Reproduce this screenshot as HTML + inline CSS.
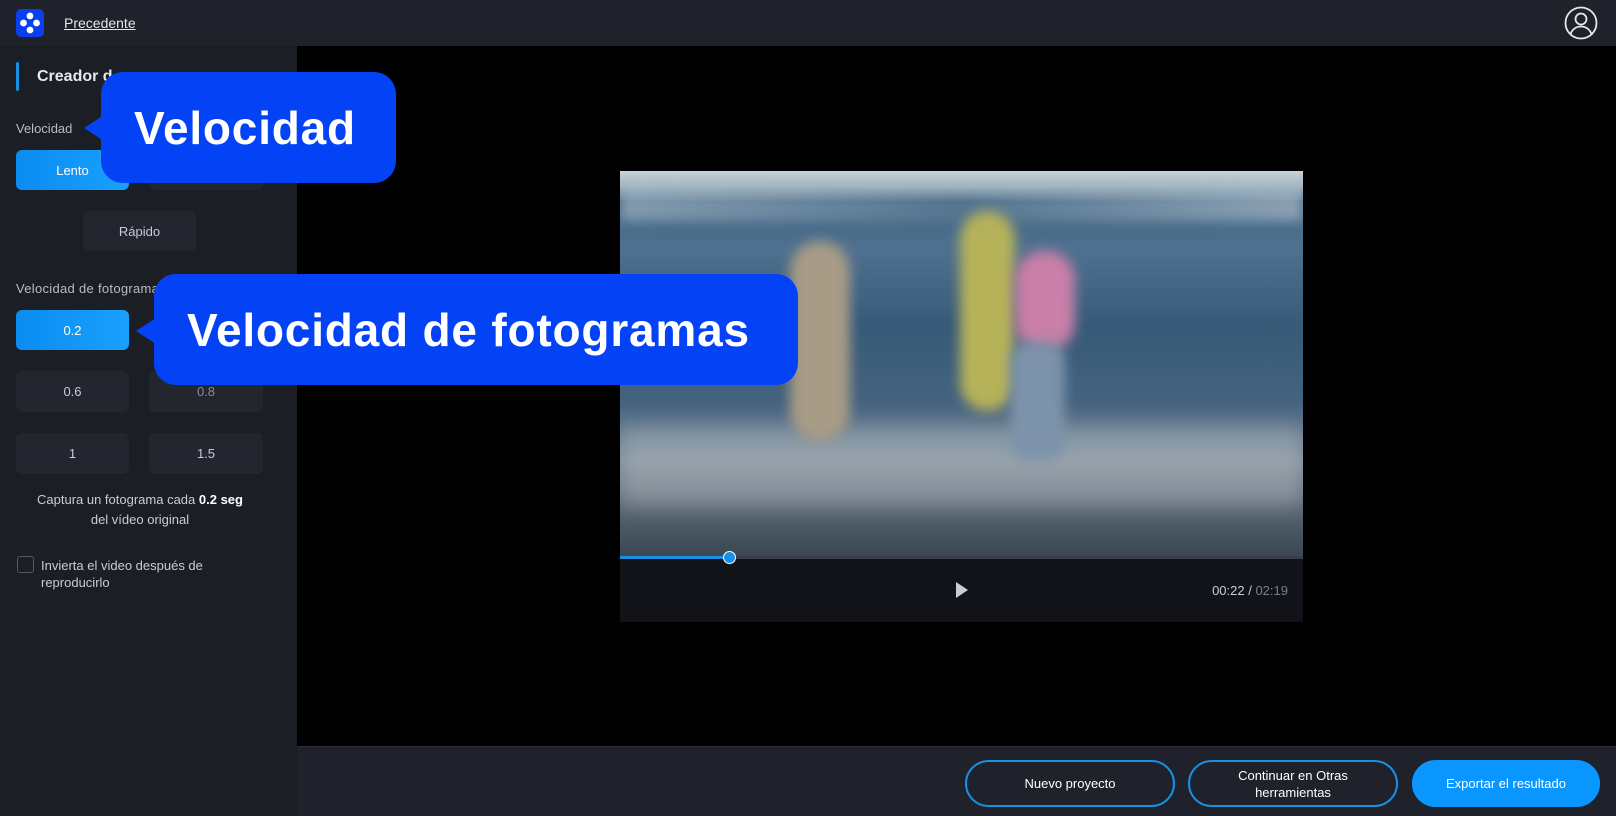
<!DOCTYPE html>
<html><head><meta charset="utf-8"><style>
*{box-sizing:border-box;margin:0;padding:0}
body{width:1616px;height:816px;background:#000;font-family:"Liberation Sans",sans-serif;position:relative;overflow:hidden;color:#fff}
.hdr{position:absolute;left:0;top:0;width:1616px;height:46px;background:#1f212b}
.side{position:absolute;left:0;top:46px;width:297px;height:770px;background:#1c1e26}
.bot{position:absolute;left:297px;top:746px;width:1319px;height:70px;background:#1f212b;border-top:1px solid #2c2f3a}
.abs{position:absolute}
.btn{position:absolute;border-radius:6px;background:#23252f;color:#c9ccd6;font-size:13px;display:flex;align-items:center;justify-content:center}
.act{background:linear-gradient(90deg,#0a8cf0,#1aa0ff);color:#fff}
.lbl{position:absolute;font-size:13px;color:#b8bbc6}
.call{position:absolute;background:#0343f5;border-radius:22px;color:#fff;font-weight:bold;font-size:46px;display:flex;align-items:center;padding-left:33px;letter-spacing:0.8px}
.pill{position:absolute;height:47px;border-radius:24px;border:2px solid #1890e6;color:#fff;font-size:13px;display:flex;align-items:center;justify-content:center;text-align:center;line-height:17px}
</style></head><body>
<div class="hdr"></div>
<div class="abs" style="left:16px;top:9px;width:28px;height:28px;background:#0a3ff0;border-radius:5px">
<svg width="28" height="28"><circle cx="14" cy="7" r="3.4" fill="#fff"/><circle cx="7.5" cy="14" r="3.4" fill="#fff"/><circle cx="20.5" cy="14" r="3.4" fill="#fff"/><circle cx="14" cy="21" r="3.4" fill="#fff"/></svg></div>
<div class="abs" style="left:64px;top:15px;font-size:14px;color:#e6e6e6;text-decoration:underline">Precedente</div>
<svg class="abs" style="left:1564px;top:6px" width="34" height="34" viewBox="0 0 34 34" fill="none" stroke="#e8e8e8" stroke-width="1.8"><circle cx="17" cy="17" r="15.5"/><circle cx="17" cy="13" r="5.5"/><path d="M6.5 28c2-5 6-7.5 10.5-7.5s8.5 2.5 10.5 7.5"/></svg>

<div class="side"></div>
<div class="abs" style="left:16px;top:62px;width:3px;height:29px;background:#1890e6;border-radius:2px"></div>
<div class="abs" style="left:37px;top:68px;font-size:16px;font-weight:bold;color:#e8e8ee">Creador d</div>
<div class="lbl" style="left:16px;top:121px">Velocidad</div>
<div class="btn act" style="left:16px;top:150px;width:113px;height:40px">Lento</div>
<div class="btn" style="left:149px;top:150px;width:114px;height:40px"></div>
<div class="btn" style="left:83px;top:211px;width:113px;height:40px">Rápido</div>
<div class="lbl" style="left:16px;top:281px;letter-spacing:0.3px">Velocidad de fotogramas</div>
<div class="btn act" style="left:16px;top:310px;width:113px;height:40px">0.2</div>
<div class="btn" style="left:16px;top:371px;width:113px;height:41px">0.6</div>
<div class="btn" style="left:149px;top:371px;width:114px;height:41px;color:#888b96">0.8</div>
<div class="btn" style="left:16px;top:433px;width:113px;height:41px">1</div>
<div class="btn" style="left:149px;top:433px;width:114px;height:41px">1.5</div>
<div class="abs" style="left:16px;top:490px;width:248px;text-align:center;font-size:13px;line-height:20px;color:#c9ccd6">Captura un fotograma cada <b style="color:#fff">0.2 seg</b><br>del vídeo original</div>
<div class="abs" style="left:17px;top:556px;width:17px;height:17px;border:1.5px solid #555964;border-radius:3px"></div>
<div class="abs" style="left:41px;top:557px;font-size:13px;line-height:17px;color:#c9ccd6">Invierta el video después de<br>reproducirlo</div>

<div class="abs" style="left:620px;top:171px;width:683px;height:386px;overflow:hidden;background:linear-gradient(180deg,#c9d3d8 0%,#9fb2bf 4%,#3f6482 8%,#4f7190 20%,#365a78 40%,#44637f 60%,#7a8794 75%,#56636f 88%,#3a4753 100%)">
<div class="abs" style="left:0;top:20px;width:683px;height:30px;background:linear-gradient(90deg,rgba(255,255,255,.35),rgba(255,255,255,.1),rgba(255,255,255,.4));filter:blur(6px)"></div>
<div class="abs" style="left:0;top:255px;width:683px;height:80px;background:rgba(220,225,230,.3);filter:blur(10px)"></div>
<div class="abs" style="left:170px;top:70px;width:60px;height:200px;background:#a89c86;border-radius:30px;filter:blur(6px)"></div>
<div class="abs" style="left:340px;top:40px;width:55px;height:200px;background:#b6b25a;border-radius:28px;filter:blur(6px)"></div>
<div class="abs" style="left:395px;top:80px;width:60px;height:100px;background:#c97fa8;border-radius:28px;filter:blur(6px)"></div>
<div class="abs" style="left:390px;top:170px;width:55px;height:120px;background:#7d93aa;border-radius:20px;filter:blur(6px)"></div>
</div>
<div class="abs" style="left:620px;top:557px;width:683px;height:65px;background:#111318"></div>
<div class="abs" style="left:620px;top:556px;width:683px;height:3px;background:#3a3d4a"></div>
<div class="abs" style="left:620px;top:556px;width:110px;height:3px;background:#1890e6"></div>
<div class="abs" style="left:723px;top:551px;width:13px;height:13px;border-radius:50%;background:#1890e6;border:1.5px solid #fff"></div>
<svg class="abs" style="left:955px;top:581px" width="14" height="18"><path d="M1 1L13 9L1 17Z" fill="#c9ccd6"/></svg>
<div class="abs" style="left:1180px;top:583px;width:108px;text-align:right;font-size:13px;color:#c9ccd6">00:22 / <span style="color:#7a7e8a">02:19</span></div>

<div class="bot"></div>
<div class="pill" style="left:965px;top:760px;width:210px">Nuevo proyecto</div>
<div class="pill" style="left:1188px;top:760px;width:210px">Continuar en Otras<br>herramientas</div>
<div class="pill" style="left:1412px;top:760px;width:188px;background:#0a96ff;border-color:#0a96ff">Exportar el resultado</div>

<div class="call" style="left:101px;top:72px;width:295px;height:111px">Velocidad</div>
<svg class="abs" style="left:84px;top:115px" width="20" height="26"><path d="M20 0L0 13L20 26Z" fill="#0343f5"/></svg>
<div class="call" style="left:154px;top:274px;width:644px;height:111px">Velocidad de fotogramas</div>
<svg class="abs" style="left:136px;top:318px" width="20" height="26"><path d="M20 0L0 13L20 26Z" fill="#0343f5"/></svg>
</body></html>
